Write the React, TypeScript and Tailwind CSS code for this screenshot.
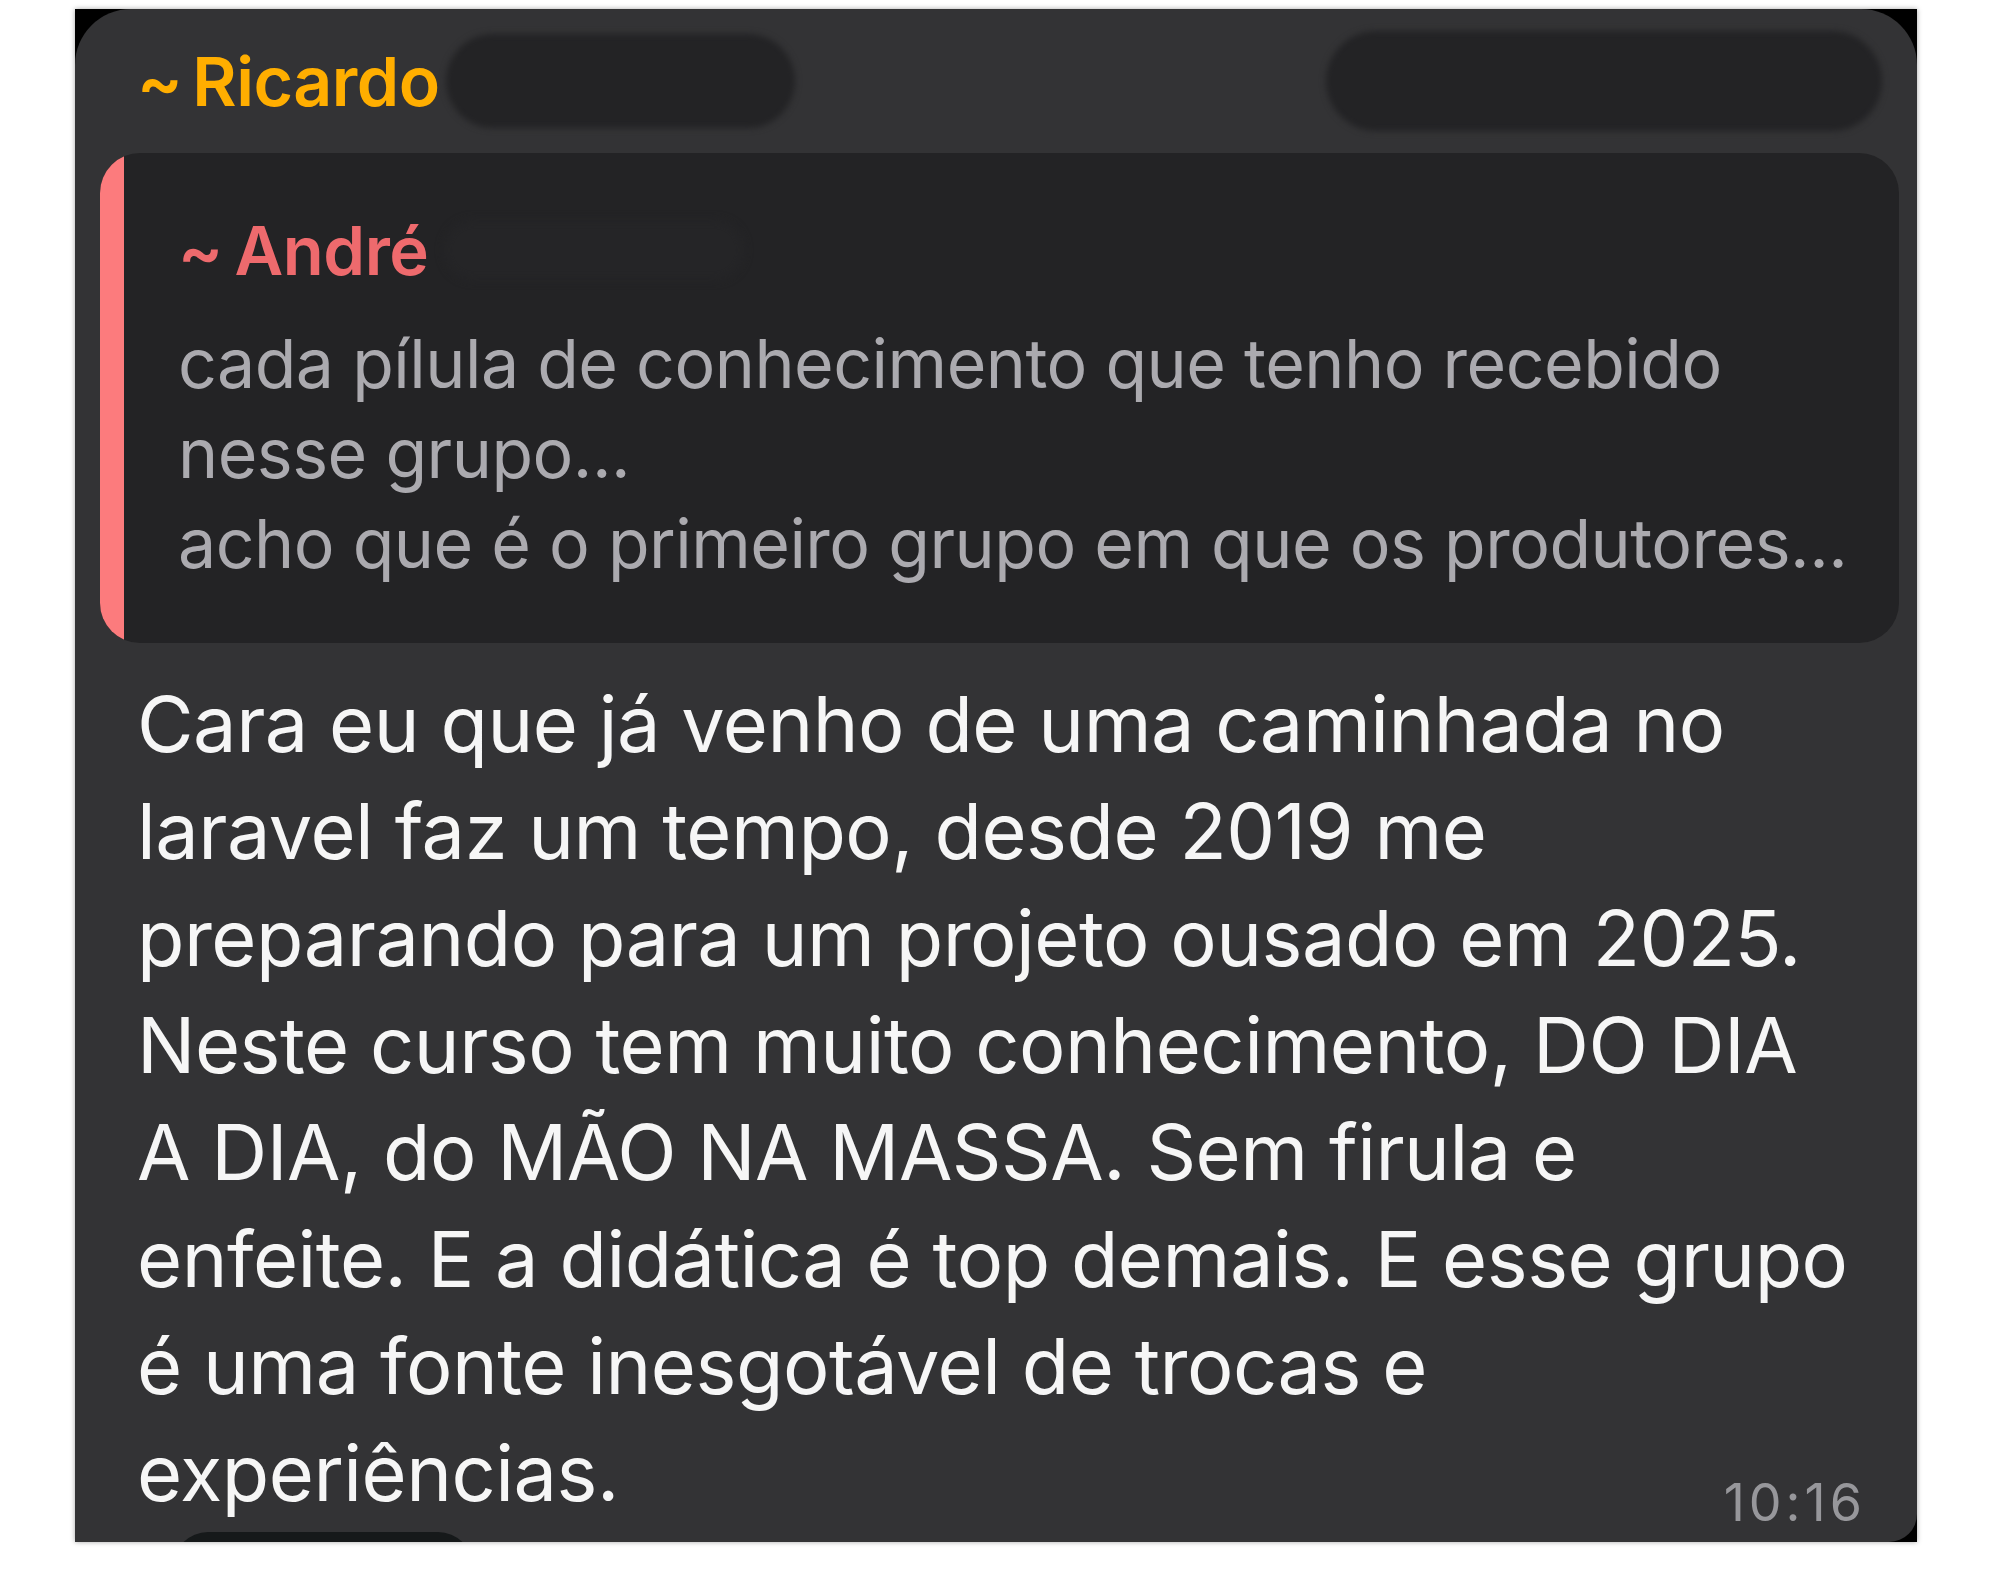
import React from 'react';

const bodyLines = [
  'Cara eu que já venho de uma caminhada no',
  'laravel faz um tempo, desde 2019 me',
  'preparando para um projeto ousado em 2025.',
  'Neste curso tem muito conhecimento, DO DIA',
  'A DIA, do MÃO NA MASSA. Sem firula e',
  'enfeite. E a didática é top demais. E esse grupo',
  'é uma fonte inesgotável de trocas e',
  'experiências.',
];

const quoteLines = [
  'cada pílula de conhecimento que tenho recebido',
  'nesse grupo...',
  'acho que é o primeiro grupo em que os produtores...',
];

const App = () => {
  return (
    <div
      className="w-[1989px] h-[1579px] bg-white pl-[75px] pt-[9px]"
      style={{ fontFamily: 'Inter, "Noto Sans", sans-serif' }}
    >
      <div className="w-[1842px] h-[1533px] bg-black overflow-hidden shadow-[0_0_5px_rgba(0,0,0,0.35)]">
        <div className="relative h-full bg-[#333335] rounded-t-[56px] rounded-br-[28px]">
          {/* header: sender + redacted bits */}
          <div className="flex items-center justify-between h-[144px] pl-[62px] pr-[35px]">
            <div className="flex items-center">
              <span className="text-[#ffae00] text-[68px] font-semibold leading-none tracking-[-0.5px]">
                <span className="mr-[10px]">~</span>Ricardo
              </span>
              <div className="ml-[6px] w-[349px] h-[94px] rounded-full bg-[#232325] blur-[3px]" />
            </div>
            <div className="w-[556px] h-[100px] rounded-full bg-[#232325] blur-[3px]" />
          </div>

          {/* quoted message */}
          <div className="ml-[25px] mr-[18px] h-[490px] flex rounded-[40px] overflow-hidden bg-[#232325]">
            <div className="w-[24px] shrink-0 bg-[#fc7b7d]" />
            <div className="flex-1 pl-[54px] pt-[60px]">
              <div className="flex items-center h-[74px]">
                <span className="text-[#ee6a6d] text-[67px] font-semibold leading-none tracking-[-0.5px]">
                  <span className="mr-[12px]">~</span>André
                </span>
                <div className="ml-[16px] w-[300px] h-[60px] rounded-full bg-[#252527] blur-[4px]" />
              </div>
              <div className="mt-[31px] text-[#abaaaf] text-[68px] leading-[90px] tracking-[-0.5px]">
                {quoteLines.map((l) => (
                  <div key={l}>{l}</div>
                ))}
              </div>
            </div>
          </div>

          {/* message body */}
          <div className="pl-[62px] pt-[28px] text-[#f6f6f6] text-[77.5px] leading-[107px] tracking-[-0.5px]">
            {bodyLines.map((l) => (
              <div key={l}>{l}</div>
            ))}
          </div>

          <span className="absolute right-[51px] bottom-[13px] text-[#97979b] text-[52px] leading-none tracking-[4px]">
            10:16
          </span>

          {/* reaction pill peeking below */}
          <div className="absolute left-[98px] bottom-[-60px] w-[300px] h-[70px] rounded-full bg-[#16191a]" />
        </div>
      </div>
    </div>
  );
};

export default App;
